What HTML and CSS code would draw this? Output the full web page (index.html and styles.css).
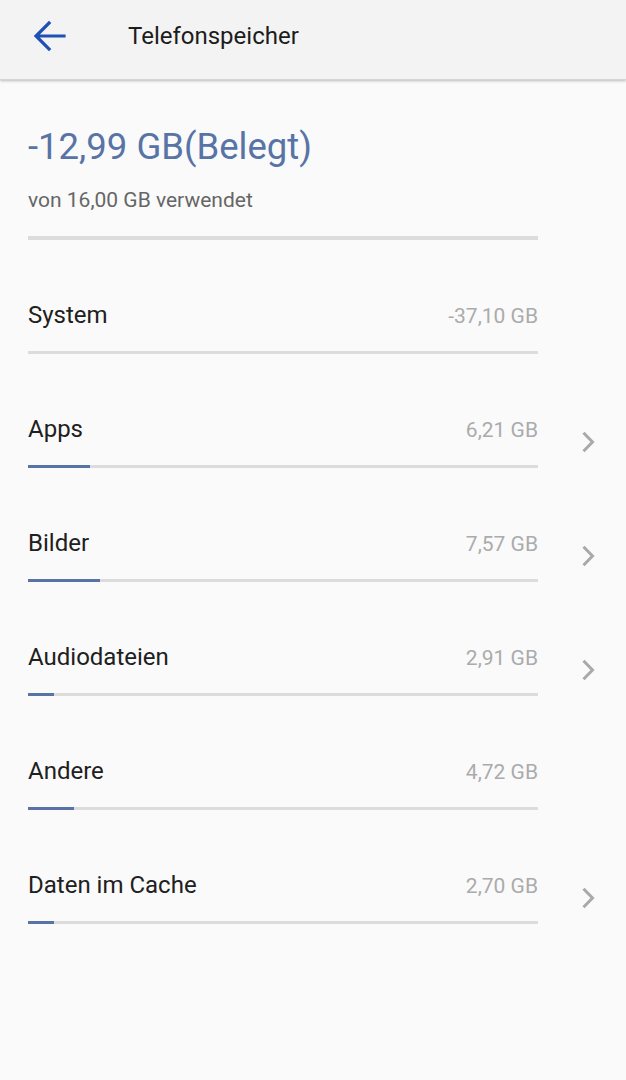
FILE: index.html
```html
<!DOCTYPE html>
<html lang="de">
<head>
<meta charset="utf-8">
<title>Telefonspeicher</title>
<link rel="stylesheet" href="styles.css">
</head>
<body>
<header class="appbar">
  <svg class="back" width="34" height="32" viewBox="0 0 34 32" aria-hidden="true">
    <path d="M31 16H4M16 3L3 16l13 13" fill="none" stroke="#1f50b4" stroke-width="3.2" stroke-linecap="square" stroke-linejoin="miter"/>
  </svg>
  <h1 class="title">Telefonspeicher</h1>
</header>
<main class="content">
  <section class="summary">
    <div class="used">-12,99 GB(Belegt)</div>
    <div class="of">von 16,00 GB verwendet</div>
    <div class="bar"></div>
  </section>
  <ul class="list">
    <li class="row">
      <div class="main">
        <div class="line"><span class="label">System</span><span class="value">-37,10 GB</span></div>
        <div class="bar"></div>
      </div>
    </li>
    <li class="row">
      <div class="main">
        <div class="line"><span class="label">Apps</span><span class="value">6,21 GB</span></div>
        <div class="bar"><div class="fill" style="width:62px"></div></div>
      </div>
      <svg class="chev" width="14" height="22" viewBox="0 0 14 22"><path d="M2.5 1.8l9 9.2-9 9.2" fill="none" stroke="#a9a9a9" stroke-width="3"/></svg>
    </li>
    <li class="row">
      <div class="main">
        <div class="line"><span class="label">Bilder</span><span class="value">7,57 GB</span></div>
        <div class="bar"><div class="fill" style="width:72px"></div></div>
      </div>
      <svg class="chev" width="14" height="22" viewBox="0 0 14 22"><path d="M2.5 1.8l9 9.2-9 9.2" fill="none" stroke="#a9a9a9" stroke-width="3"/></svg>
    </li>
    <li class="row">
      <div class="main">
        <div class="line"><span class="label">Audiodateien</span><span class="value">2,91 GB</span></div>
        <div class="bar"><div class="fill" style="width:26px"></div></div>
      </div>
      <svg class="chev" width="14" height="22" viewBox="0 0 14 22"><path d="M2.5 1.8l9 9.2-9 9.2" fill="none" stroke="#a9a9a9" stroke-width="3"/></svg>
    </li>
    <li class="row">
      <div class="main">
        <div class="line"><span class="label">Andere</span><span class="value">4,72 GB</span></div>
        <div class="bar"><div class="fill" style="width:46px"></div></div>
      </div>
    </li>
    <li class="row">
      <div class="main">
        <div class="line"><span class="label">Daten im Cache</span><span class="value">2,70 GB</span></div>
        <div class="bar"><div class="fill" style="width:26px"></div></div>
      </div>
      <svg class="chev" width="14" height="22" viewBox="0 0 14 22"><path d="M2.5 1.8l9 9.2-9 9.2" fill="none" stroke="#a9a9a9" stroke-width="3"/></svg>
    </li>
  </ul>
</main>
</body>
</html>
```
FILE: styles.css
```css
html, body {
  margin: 0;
  padding: 0;
}
body {
  width: 626px;
  height: 1080px;
  background: #fafafa;
  font-family: Roboto, "Liberation Sans", sans-serif;
  overflow: hidden;
}
.appbar {
  height: 80px;
  background: #f3f3f3;
  display: flex;
  align-items: center;
  box-shadow: 0 1px 2px rgba(0,0,0,0.18), 0 2px 3px rgba(0,0,0,0.06);
  border-bottom: 1px solid #d4d4d4;
  position: relative;
  z-index: 1;
  box-sizing: border-box;
}
.back {
  margin-left: 33px;
  margin-bottom: 8px;
  flex: none;
}
.title {
  margin: 0 0 0 61px;
  font-size: 24px;
  font-weight: 400;
  color: #1c1c1c;
  line-height: 28px;
  padding-bottom: 8px;
}
.content {
  padding-left: 28px;
}
.summary {
  padding-top: 45px;
  width: 510px;
}
.used {
  font-size: 36.5px;
  line-height: 44px;
  color: #5874a6;
}
.of {
  margin-top: 18px;
  font-size: 21px;
  line-height: 26px;
  color: #666;
}
.summary .bar {
  margin-top: 23px;
}
.bar {
  height: 4px;
  background: #dcdcdc;
  width: 510px;
}
.fill {
  height: 100%;
  background: #5873a8;
}
.list {
  list-style: none;
  margin: 0;
  padding: 0;
}
.row {
  display: flex;
  align-items: flex-end;
}
.main {
  width: 510px;
  padding-top: 61px;
}
.row .bar {
  height: 3px;
}
.line {
  display: flex;
  justify-content: space-between;
  align-items: baseline;
  height: 28px;
  margin-bottom: 22px;
}
.label {
  font-size: 24px;
  line-height: 28px;
  color: #202020;
}
.value {
  font-size: 21px;
  line-height: 28px;
  color: #ababab;
}
.chev {
  display: block;
  flex: none;
  margin-left: 43px;
  margin-bottom: 15px;
}
```
